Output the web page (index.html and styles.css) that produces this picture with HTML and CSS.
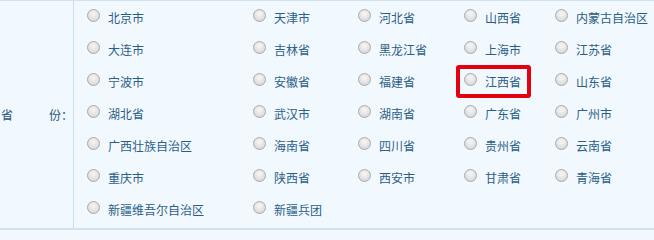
FILE: index.html
```html
<!DOCTYPE html>
<html lang="zh-CN">
<head>
<meta charset="utf-8">
<title>省份</title>
<link rel="stylesheet" href="styles.css">
</head>
<body>
<div class="form-row">
  <div class="label"><span>省</span><span>份：</span></div>
  <div class="options">
    <label class="opt"><span class="radio"></span><span class="txt">北京市</span></label>
    <label class="opt"><span class="radio"></span><span class="txt">天津市</span></label>
    <label class="opt"><span class="radio"></span><span class="txt">河北省</span></label>
    <label class="opt"><span class="radio"></span><span class="txt">山西省</span></label>
    <label class="opt"><span class="radio"></span><span class="txt">内蒙古自治区</span></label>

    <label class="opt"><span class="radio"></span><span class="txt">大连市</span></label>
    <label class="opt"><span class="radio"></span><span class="txt">吉林省</span></label>
    <label class="opt"><span class="radio"></span><span class="txt">黑龙江省</span></label>
    <label class="opt"><span class="radio"></span><span class="txt">上海市</span></label>
    <label class="opt"><span class="radio"></span><span class="txt">江苏省</span></label>

    <label class="opt"><span class="radio"></span><span class="txt">宁波市</span></label>
    <label class="opt"><span class="radio"></span><span class="txt">安徽省</span></label>
    <label class="opt"><span class="radio"></span><span class="txt">福建省</span></label>
    <label class="opt hl"><span class="radio"></span><span class="txt">江西省</span></label>
    <label class="opt"><span class="radio"></span><span class="txt">山东省</span></label>

    <label class="opt"><span class="radio"></span><span class="txt">湖北省</span></label>
    <label class="opt"><span class="radio"></span><span class="txt">武汉市</span></label>
    <label class="opt"><span class="radio"></span><span class="txt">湖南省</span></label>
    <label class="opt"><span class="radio"></span><span class="txt">广东省</span></label>
    <label class="opt"><span class="radio"></span><span class="txt">广州市</span></label>

    <label class="opt"><span class="radio"></span><span class="txt">广西壮族自治区</span></label>
    <label class="opt"><span class="radio"></span><span class="txt">海南省</span></label>
    <label class="opt"><span class="radio"></span><span class="txt">四川省</span></label>
    <label class="opt"><span class="radio"></span><span class="txt">贵州省</span></label>
    <label class="opt"><span class="radio"></span><span class="txt">云南省</span></label>

    <label class="opt"><span class="radio"></span><span class="txt">重庆市</span></label>
    <label class="opt"><span class="radio"></span><span class="txt">陕西省</span></label>
    <label class="opt"><span class="radio"></span><span class="txt">西安市</span></label>
    <label class="opt"><span class="radio"></span><span class="txt">甘肃省</span></label>
    <label class="opt"><span class="radio"></span><span class="txt">青海省</span></label>

    <label class="opt"><span class="radio"></span><span class="txt">新疆维吾尔自治区</span></label>
    <label class="opt"><span class="radio"></span><span class="txt">新疆兵团</span></label>
  </div>
</div>
</body>
</html>
```

FILE: styles.css
```css
html, body {
  margin: 0;
  padding: 0;
  background: #f2f9fe;
}

body {
  font-family: "Noto Sans CJK SC", "Liberation Sans", sans-serif;
  font-size: 12px;
  color: #2b5e87;
}

.form-row {
  display: flex;
  width: 654px;
  border-top: 1px solid #cfe3f1;
  border-bottom: 2px solid #cfe3f1;
  background: #f2f9fe;
}

.label {
  width: 72px;
  flex: none;
  display: flex;
  align-items: center;
  justify-content: space-between;
  padding: 0 0 0 1px;
  border-right: 1px solid #c8dff0;
  color: #24547a;
  line-height: 12px;
}

.options {
  flex: 1;
  display: grid;
  grid-template-columns: 166px 105px 106px 91px 1fr;
  grid-auto-rows: 32px;
  padding: 1px 0 2px 13px;
}

.opt {
  position: relative;
  display: flex;
  align-items: center;
  height: 32px;
  white-space: nowrap;
}

.radio {
  flex: none;
  width: 11px;
  height: 11px;
  border: 1px solid #a9a9a9;
  border-radius: 50%;
  background: radial-gradient(circle at 50% 35%, #f7f7f7 0%, #e2e2e2 55%, #cfcfcf 100%);
  margin-right: 8px;
  margin-bottom: 6px;
}

.txt {
  line-height: 12px;
}

.hl::after {
  content: "";
  position: absolute;
  left: -8px;
  top: -1px;
  width: 75px;
  height: 33px;
  box-sizing: border-box;
  border: 4px solid #e3000f;
  border-radius: 3px;
}
```
